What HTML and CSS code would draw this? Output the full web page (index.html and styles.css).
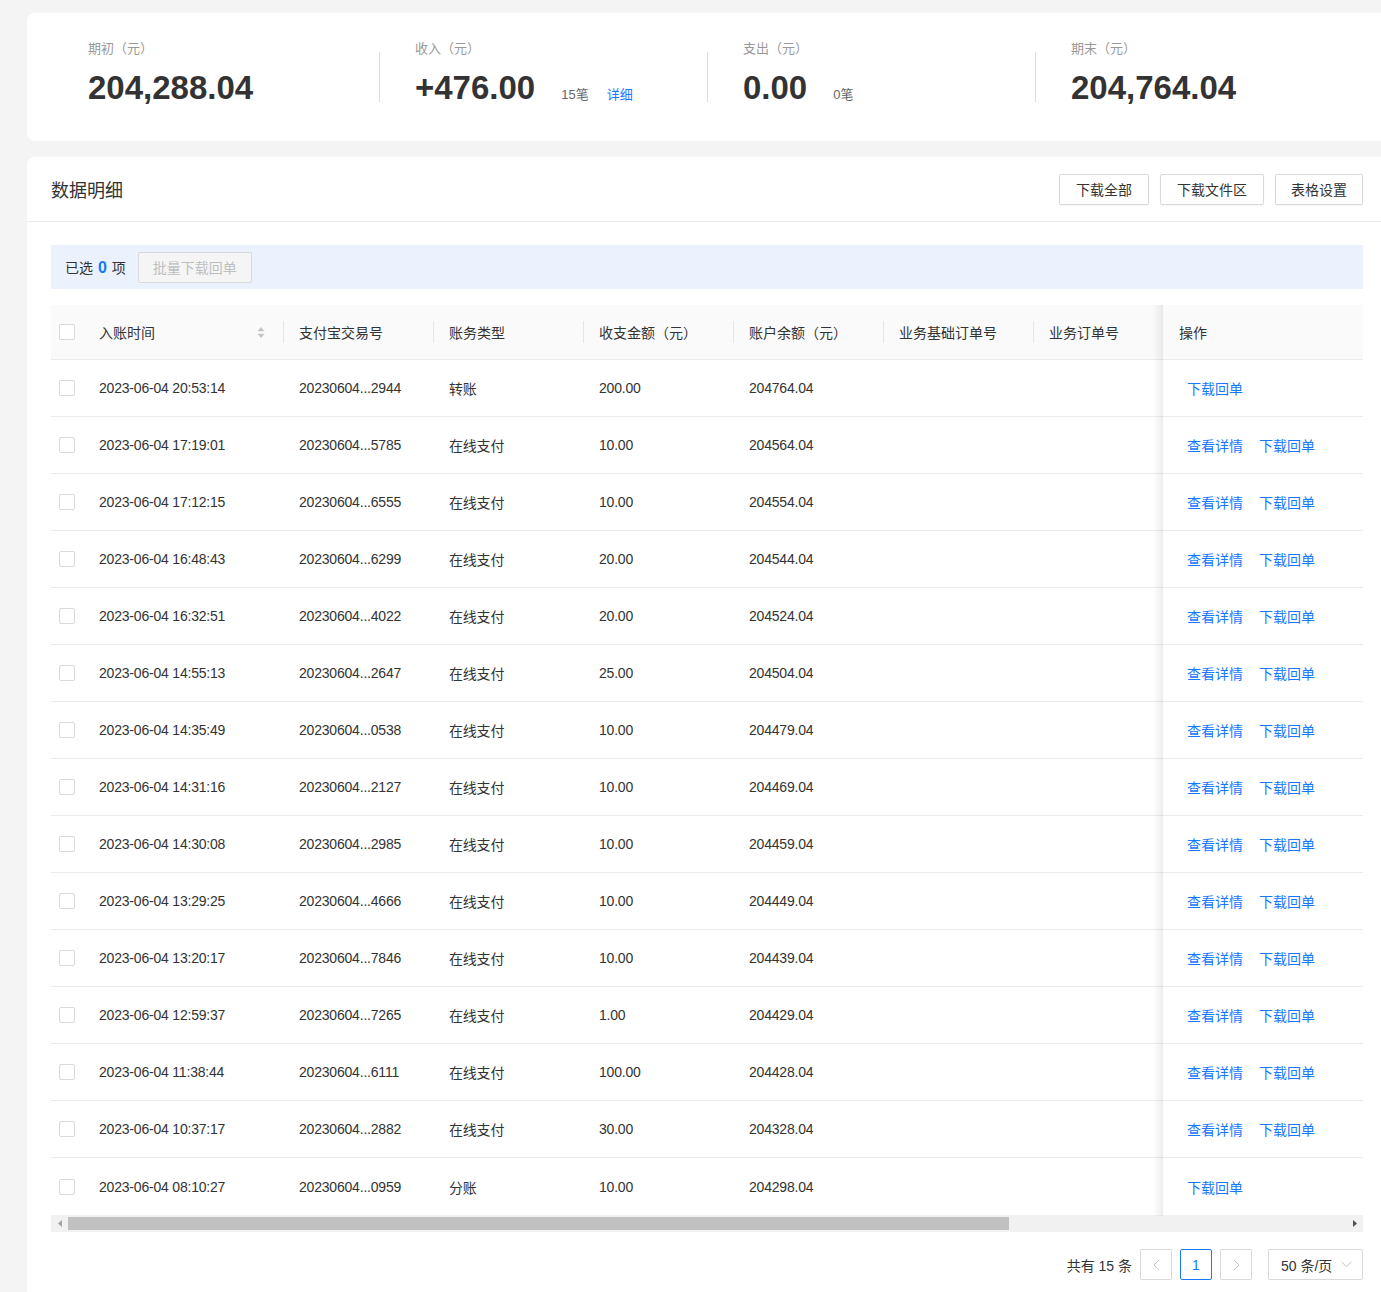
FILE: index.html
```html
<!DOCTYPE html>
<html lang="zh-CN">
<head>
<meta charset="utf-8">
<title>数据明细</title>
<link rel="stylesheet" href="styles.css">
</head>
<body>
<div class="page">
  <section class="summary">
    <div class="stat">
      <div class="stat-label">期初（元）</div>
      <div class="stat-value"><span class="num">204,288.04</span></div>
    </div>
    <div class="stat divided">
      <div class="stat-label">收入（元）</div>
      <div class="stat-value"><span class="num">+476.00</span><span class="count">15笔</span><a class="detail-link">详细</a></div>
    </div>
    <div class="stat divided">
      <div class="stat-label">支出（元）</div>
      <div class="stat-value"><span class="num">0.00</span><span class="count">0笔</span></div>
    </div>
    <div class="stat divided">
      <div class="stat-label">期末（元）</div>
      <div class="stat-value"><span class="num">204,764.04</span></div>
    </div>
  </section>

  <section class="detail">
    <div class="detail-head">
      <h2 class="detail-title">数据明细</h2>
      <div class="head-actions">
        <button class="btn">下载全部</button>
        <button class="btn">下载文件区</button>
        <button class="btn btn-narrow">表格设置</button>
      </div>
    </div>

    <div class="detail-body">
      <div class="select-bar">
        <span class="selected">已选 <b class="zero">0</b> 项</span>
        <button class="btn-disabled">批量下载回单</button>
      </div>

      <div class="table">
        <div class="tr thead">
          <div class="cell chk"><span class="checkbox"></span></div>
          <div class="cell time"><span>入账时间</span><svg class="sort" width="8" height="11" viewBox="0 0 8 11"><path d="M4 0L7.5 4.2H0.5Z M4 11L0.5 6.8H7.5Z" fill="#c4c4c4"/></svg></div>
          <div class="cell sep">支付宝交易号</div>
          <div class="cell sep">账务类型</div>
          <div class="cell sep">收支金额（元）</div>
          <div class="cell sep">账户余额（元）</div>
          <div class="cell sep">业务基础订单号</div>
          <div class="cell sep">业务订单号</div>
          <div class="cell op">操作</div>
        </div>

        <div class="tr">
          <div class="cell chk"><span class="checkbox"></span></div>
          <div class="cell time">2023-06-04 20:53:14</div>
          <div class="cell">20230604...2944</div>
          <div class="cell">转账</div>
          <div class="cell">200.00</div>
          <div class="cell">204764.04</div>
          <div class="cell"></div>
          <div class="cell"></div>
          <div class="cell op"><a class="op-link">下载回单</a></div>
        </div>
        <div class="tr">
          <div class="cell chk"><span class="checkbox"></span></div>
          <div class="cell time">2023-06-04 17:19:01</div>
          <div class="cell">20230604...5785</div>
          <div class="cell">在线支付</div>
          <div class="cell">10.00</div>
          <div class="cell">204564.04</div>
          <div class="cell"></div>
          <div class="cell"></div>
          <div class="cell op"><a class="op-link">查看详情</a><a class="op-link">下载回单</a></div>
        </div>
        <div class="tr">
          <div class="cell chk"><span class="checkbox"></span></div>
          <div class="cell time">2023-06-04 17:12:15</div>
          <div class="cell">20230604...6555</div>
          <div class="cell">在线支付</div>
          <div class="cell">10.00</div>
          <div class="cell">204554.04</div>
          <div class="cell"></div>
          <div class="cell"></div>
          <div class="cell op"><a class="op-link">查看详情</a><a class="op-link">下载回单</a></div>
        </div>
        <div class="tr">
          <div class="cell chk"><span class="checkbox"></span></div>
          <div class="cell time">2023-06-04 16:48:43</div>
          <div class="cell">20230604...6299</div>
          <div class="cell">在线支付</div>
          <div class="cell">20.00</div>
          <div class="cell">204544.04</div>
          <div class="cell"></div>
          <div class="cell"></div>
          <div class="cell op"><a class="op-link">查看详情</a><a class="op-link">下载回单</a></div>
        </div>
        <div class="tr">
          <div class="cell chk"><span class="checkbox"></span></div>
          <div class="cell time">2023-06-04 16:32:51</div>
          <div class="cell">20230604...4022</div>
          <div class="cell">在线支付</div>
          <div class="cell">20.00</div>
          <div class="cell">204524.04</div>
          <div class="cell"></div>
          <div class="cell"></div>
          <div class="cell op"><a class="op-link">查看详情</a><a class="op-link">下载回单</a></div>
        </div>
        <div class="tr">
          <div class="cell chk"><span class="checkbox"></span></div>
          <div class="cell time">2023-06-04 14:55:13</div>
          <div class="cell">20230604...2647</div>
          <div class="cell">在线支付</div>
          <div class="cell">25.00</div>
          <div class="cell">204504.04</div>
          <div class="cell"></div>
          <div class="cell"></div>
          <div class="cell op"><a class="op-link">查看详情</a><a class="op-link">下载回单</a></div>
        </div>
        <div class="tr">
          <div class="cell chk"><span class="checkbox"></span></div>
          <div class="cell time">2023-06-04 14:35:49</div>
          <div class="cell">20230604...0538</div>
          <div class="cell">在线支付</div>
          <div class="cell">10.00</div>
          <div class="cell">204479.04</div>
          <div class="cell"></div>
          <div class="cell"></div>
          <div class="cell op"><a class="op-link">查看详情</a><a class="op-link">下载回单</a></div>
        </div>
        <div class="tr">
          <div class="cell chk"><span class="checkbox"></span></div>
          <div class="cell time">2023-06-04 14:31:16</div>
          <div class="cell">20230604...2127</div>
          <div class="cell">在线支付</div>
          <div class="cell">10.00</div>
          <div class="cell">204469.04</div>
          <div class="cell"></div>
          <div class="cell"></div>
          <div class="cell op"><a class="op-link">查看详情</a><a class="op-link">下载回单</a></div>
        </div>
        <div class="tr">
          <div class="cell chk"><span class="checkbox"></span></div>
          <div class="cell time">2023-06-04 14:30:08</div>
          <div class="cell">20230604...2985</div>
          <div class="cell">在线支付</div>
          <div class="cell">10.00</div>
          <div class="cell">204459.04</div>
          <div class="cell"></div>
          <div class="cell"></div>
          <div class="cell op"><a class="op-link">查看详情</a><a class="op-link">下载回单</a></div>
        </div>
        <div class="tr">
          <div class="cell chk"><span class="checkbox"></span></div>
          <div class="cell time">2023-06-04 13:29:25</div>
          <div class="cell">20230604...4666</div>
          <div class="cell">在线支付</div>
          <div class="cell">10.00</div>
          <div class="cell">204449.04</div>
          <div class="cell"></div>
          <div class="cell"></div>
          <div class="cell op"><a class="op-link">查看详情</a><a class="op-link">下载回单</a></div>
        </div>
        <div class="tr">
          <div class="cell chk"><span class="checkbox"></span></div>
          <div class="cell time">2023-06-04 13:20:17</div>
          <div class="cell">20230604...7846</div>
          <div class="cell">在线支付</div>
          <div class="cell">10.00</div>
          <div class="cell">204439.04</div>
          <div class="cell"></div>
          <div class="cell"></div>
          <div class="cell op"><a class="op-link">查看详情</a><a class="op-link">下载回单</a></div>
        </div>
        <div class="tr">
          <div class="cell chk"><span class="checkbox"></span></div>
          <div class="cell time">2023-06-04 12:59:37</div>
          <div class="cell">20230604...7265</div>
          <div class="cell">在线支付</div>
          <div class="cell">1.00</div>
          <div class="cell">204429.04</div>
          <div class="cell"></div>
          <div class="cell"></div>
          <div class="cell op"><a class="op-link">查看详情</a><a class="op-link">下载回单</a></div>
        </div>
        <div class="tr">
          <div class="cell chk"><span class="checkbox"></span></div>
          <div class="cell time">2023-06-04 11:38:44</div>
          <div class="cell">20230604...6111</div>
          <div class="cell">在线支付</div>
          <div class="cell">100.00</div>
          <div class="cell">204428.04</div>
          <div class="cell"></div>
          <div class="cell"></div>
          <div class="cell op"><a class="op-link">查看详情</a><a class="op-link">下载回单</a></div>
        </div>
        <div class="tr">
          <div class="cell chk"><span class="checkbox"></span></div>
          <div class="cell time">2023-06-04 10:37:17</div>
          <div class="cell">20230604...2882</div>
          <div class="cell">在线支付</div>
          <div class="cell">30.00</div>
          <div class="cell">204328.04</div>
          <div class="cell"></div>
          <div class="cell"></div>
          <div class="cell op"><a class="op-link">查看详情</a><a class="op-link">下载回单</a></div>
        </div>
        <div class="tr last">
          <div class="cell chk"><span class="checkbox"></span></div>
          <div class="cell time">2023-06-04 08:10:27</div>
          <div class="cell">20230604...0959</div>
          <div class="cell">分账</div>
          <div class="cell">10.00</div>
          <div class="cell">204298.04</div>
          <div class="cell"></div>
          <div class="cell"></div>
          <div class="cell op"><a class="op-link">下载回单</a></div>
        </div>

        <div class="hscroll">
          <div class="sb-arrow"><svg width="4" height="7" viewBox="0 0 4 7"><path d="M4 0V7L0 3.5Z" fill="#a3a3a3"/></svg></div>
          <div class="sb-track"><div class="sb-thumb"></div></div>
          <div class="sb-arrow"><svg width="4" height="7" viewBox="0 0 4 7"><path d="M0 0V7L4 3.5Z" fill="#505050"/></svg></div>
        </div>
      </div>

      <div class="pager">
        <span class="total">共有 15 条</span>
        <span class="pg disabled"><svg width="7" height="12" viewBox="0 0 7 12"><path d="M6 1L1 6L6 11" fill="none" stroke="#c8c8c8" stroke-width="1"/></svg></span>
        <span class="pg active">1</span>
        <span class="pg disabled"><svg width="7" height="12" viewBox="0 0 7 12"><path d="M1 1L6 6L1 11" fill="none" stroke="#c8c8c8" stroke-width="1"/></svg></span>
        <span class="size">50 条/页<svg width="11" height="7" viewBox="0 0 11 7"><path d="M0.5 0.8L5.5 5.8L10.5 0.8" fill="none" stroke="#c0c0c0" stroke-width="1"/></svg></span>
      </div>
    </div>
  </section>
</div>
</body>
</html>
```

FILE: styles.css
```css
* {
  box-sizing: border-box;
}

body {
  margin: 0;
  background: #f4f4f4;
  font-family: "Liberation Sans", "Noto Sans CJK SC", sans-serif;
  color: #333;
  font-size: 14px;
  overflow: hidden;
}

.page {
  padding: 13px 0 0 27px;
}

/* ---------- summary ---------- */
.summary {
  background: #fff;
  border-radius: 8px 0 0 8px;
  display: grid;
  grid-template-columns: repeat(4, 328px);
  padding: 26px 18px 33px 24px;
}

.stat {
  position: relative;
  padding-left: 37px;
}

.stat.divided {
  padding-left: 36px;
}

.stat.divided::before {
  content: "";
  position: absolute;
  left: 0;
  top: 13px;
  width: 1px;
  height: 50px;
  background: #dcdcdc;
}

.stat-label {
  font-size: 13px;
  line-height: 20px;
  color: #999;
}

.stat-value {
  display: flex;
  align-items: baseline;
  margin-top: 9px;
  line-height: 40px;
  height: 40px;
}

.num {
  font-size: 33px;
  font-weight: bold;
  color: #333;
}

.count {
  margin-left: 26px;
  font-size: 13px;
  color: #666;
}

.detail-link {
  margin-left: 18px;
  font-size: 13px;
  color: #1677ff;
  cursor: pointer;
}

/* ---------- detail card ---------- */
.detail {
  margin-top: 16px;
  background: #fff;
  border-radius: 8px 0 0 0;
  padding-bottom: 13px;
}

.detail-head {
  height: 65px;
  display: flex;
  align-items: center;
  justify-content: space-between;
  padding: 0 18px 0 24px;
  border-bottom: 1px solid #ebebeb;
}

.detail-title {
  margin: 0;
  font-size: 18px;
  font-weight: normal;
  color: #333;
}

.head-actions {
  display: flex;
  gap: 11px;
}

.btn {
  height: 31px;
  padding: 0 16px;
  border: 1px solid #d9d9d9;
  border-radius: 2px;
  background: #fff;
  font-family: inherit;
  font-size: 14px;
  color: #333;
  box-shadow: 0 1px 2px rgba(0, 0, 0, 0.04);
}

.btn-narrow {
  padding: 0 15px;
}

.detail-body {
  padding: 23px 18px 0 24px;
}

.select-bar {
  height: 44px;
  background: #ebf2fe;
  display: flex;
  align-items: center;
  gap: 12px;
  padding-left: 14px;
}

.selected {
  font-size: 14px;
  color: #333;
}

.zero {
  color: #1677ff;
  font-size: 16px;
  font-weight: bold;
  margin: 0 1px;
}

.btn-disabled {
  height: 31px;
  padding: 0 14px;
  background: #f5f5f5;
  border: 1px solid #d9d9d9;
  border-radius: 2px;
  color: #bfbfbf;
  font-family: inherit;
  font-size: 14px;
}

/* ---------- table ---------- */
.table {
  margin-top: 16px;
}

.tr {
  display: grid;
  grid-template-columns: 48px 184px 150px 150px 150px 150px 150px 130px 200px;
  height: 57px;
  border-bottom: 1px solid #ebebeb;
  font-size: 14px;
  color: #333;
  letter-spacing: -0.2px;
}

.tr.last {
  border-bottom: 0;
}

.thead {
  height: 55px;
  background: #fafafa;
  letter-spacing: 0;
}

.cell {
  display: flex;
  align-items: center;
  padding-left: 16px;
  position: relative;
  white-space: nowrap;
}

.cell.chk {
  padding-left: 8px;
}

.cell.time {
  padding-left: 0;
}

.thead .cell.time {
  justify-content: space-between;
  padding-right: 18px;
}

.thead .cell.sep::before {
  content: "";
  position: absolute;
  left: 0;
  top: 16px;
  width: 1px;
  height: 22px;
  background: #e6e6e6;
}

.checkbox {
  width: 16px;
  height: 16px;
  border: 1px solid #d9d9d9;
  border-radius: 2px;
  background: #fff;
}

.op {
  background: #fff;
}

.thead .op {
  background: #fafafa;
}

.op::before {
  content: "";
  position: absolute;
  left: -10px;
  top: 0;
  bottom: -1px;
  width: 10px;
  background: linear-gradient(to left, rgba(0, 0, 0, 0.07), rgba(0, 0, 0, 0));
}

.op-link {
  padding: 0 8px;
  color: #1677ff;
  cursor: pointer;
  letter-spacing: 0;
}

/* fake horizontal scrollbar */
.hscroll {
  display: flex;
  height: 17px;
  background: #f1f1f1;
}

.sb-arrow {
  width: 17px;
  display: flex;
  align-items: center;
  justify-content: center;
}

.sb-track {
  flex: 1;
  padding: 2px 0;
}

.sb-thumb {
  width: 941px;
  height: 13px;
  background: #c1c1c1;
}

/* ---------- pagination ---------- */
.pager {
  display: flex;
  justify-content: flex-end;
  align-items: center;
  gap: 8px;
  margin-top: 17px;
}

.total {
  font-size: 14px;
  color: #333;
}

.pg {
  width: 32px;
  height: 31px;
  border: 1px solid #d9d9d9;
  border-radius: 2px;
  display: flex;
  align-items: center;
  justify-content: center;
  font-size: 14px;
  color: #333;
}

.pg.active {
  border-color: #1677ff;
  color: #1677ff;
}

.size {
  margin-left: 8px;
  width: 95px;
  height: 31px;
  border: 1px solid #d9d9d9;
  border-radius: 2px;
  display: flex;
  align-items: center;
  justify-content: space-between;
  padding: 0 10px 0 12px;
  font-size: 14px;
  color: #333;
}
```
